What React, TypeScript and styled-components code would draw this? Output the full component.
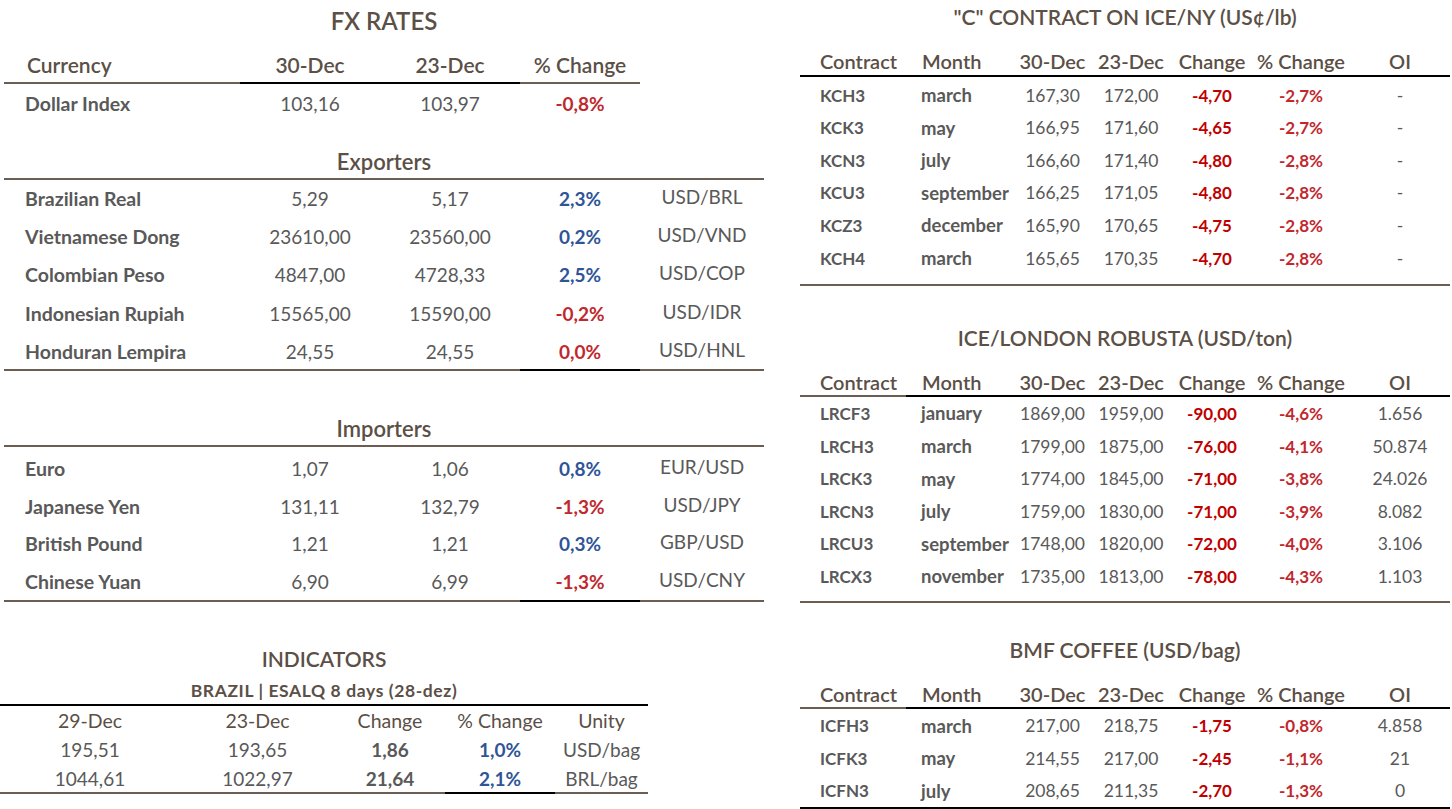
import React from 'react';
import styled, { createGlobalStyle } from 'styled-components';

const BROWN = '#6b5d51';
const INK = '#5b4f46';
const GRAY = '#595959';
const RED = '#c00000';
const RED_SOFT = '#c0282e';
const BLUE = '#2f5597';

const GlobalStyle = createGlobalStyle`
  body {
    margin: 0;
    background: #ffffff;
    font-family: Lato, "Open Sans", "Liberation Sans", sans-serif;
    color: ${GRAY};
  }
`;

type Tone = 'up' | 'down';

interface FxItem {
  name: string;
  last: string;
  prev: string;
  pct: string;
  tone: Tone;
  pair: string;
}

interface ContractItem {
  code: string;
  month: string;
  last: string;
  prev: string;
  change: string;
  pct: string;
  oi: string;
}

const exporters: FxItem[] = [
  { name: 'Brazilian Real', last: '5,29', prev: '5,17', pct: '2,3%', tone: 'up', pair: 'USD/BRL' },
  { name: 'Vietnamese Dong', last: '23610,00', prev: '23560,00', pct: '0,2%', tone: 'up', pair: 'USD/VND' },
  { name: 'Colombian Peso', last: '4847,00', prev: '4728,33', pct: '2,5%', tone: 'up', pair: 'USD/COP' },
  { name: 'Indonesian Rupiah', last: '15565,00', prev: '15590,00', pct: '-0,2%', tone: 'down', pair: 'USD/IDR' },
  { name: 'Honduran Lempira', last: '24,55', prev: '24,55', pct: '0,0%', tone: 'down', pair: 'USD/HNL' },
];

const importers: FxItem[] = [
  { name: 'Euro', last: '1,07', prev: '1,06', pct: '0,8%', tone: 'up', pair: 'EUR/USD' },
  { name: 'Japanese Yen', last: '131,11', prev: '132,79', pct: '-1,3%', tone: 'down', pair: 'USD/JPY' },
  { name: 'British Pound', last: '1,21', prev: '1,21', pct: '0,3%', tone: 'up', pair: 'GBP/USD' },
  { name: 'Chinese Yuan', last: '6,90', prev: '6,99', pct: '-1,3%', tone: 'down', pair: 'USD/CNY' },
];

const arabica: ContractItem[] = [
  { code: 'KCH3', month: 'march', last: '167,30', prev: '172,00', change: '-4,70', pct: '-2,7%', oi: '-' },
  { code: 'KCK3', month: 'may', last: '166,95', prev: '171,60', change: '-4,65', pct: '-2,7%', oi: '-' },
  { code: 'KCN3', month: 'july', last: '166,60', prev: '171,40', change: '-4,80', pct: '-2,8%', oi: '-' },
  { code: 'KCU3', month: 'september', last: '166,25', prev: '171,05', change: '-4,80', pct: '-2,8%', oi: '-' },
  { code: 'KCZ3', month: 'december', last: '165,90', prev: '170,65', change: '-4,75', pct: '-2,8%', oi: '-' },
  { code: 'KCH4', month: 'march', last: '165,65', prev: '170,35', change: '-4,70', pct: '-2,8%', oi: '-' },
];

const robusta: ContractItem[] = [
  { code: 'LRCF3', month: 'january', last: '1869,00', prev: '1959,00', change: '-90,00', pct: '-4,6%', oi: '1.656' },
  { code: 'LRCH3', month: 'march', last: '1799,00', prev: '1875,00', change: '-76,00', pct: '-4,1%', oi: '50.874' },
  { code: 'LRCK3', month: 'may', last: '1774,00', prev: '1845,00', change: '-71,00', pct: '-3,8%', oi: '24.026' },
  { code: 'LRCN3', month: 'july', last: '1759,00', prev: '1830,00', change: '-71,00', pct: '-3,9%', oi: '8.082' },
  { code: 'LRCU3', month: 'september', last: '1748,00', prev: '1820,00', change: '-72,00', pct: '-4,0%', oi: '3.106' },
  { code: 'LRCX3', month: 'november', last: '1735,00', prev: '1813,00', change: '-78,00', pct: '-4,3%', oi: '1.103' },
];

const bmf: ContractItem[] = [
  { code: 'ICFH3', month: 'march', last: '217,00', prev: '218,75', change: '-1,75', pct: '-0,8%', oi: '4.858' },
  { code: 'ICFK3', month: 'may', last: '214,55', prev: '217,00', change: '-2,45', pct: '-1,1%', oi: '21' },
  { code: 'ICFN3', month: 'july', last: '208,65', prev: '211,35', change: '-2,70', pct: '-1,3%', oi: '0' },
];

/* ---------- page ---------- */

const Page = styled.div`
  display: flex;
  width: 1452px;
  height: 809px;
  overflow: hidden;
`;

const LeftColumn = styled.div`
  width: 800px;
  display: flex;
  flex-direction: column;
`;

const RightColumn = styled.div`
  width: 650px;
  display: flex;
  flex-direction: column;
`;

const BlockTitle = styled.div<{ $h: number; $mt?: number; $size?: number }>`
  height: ${p => p.$h}px;
  margin-top: ${p => p.$mt ?? 0}px;
  display: flex;
  align-items: center;
  justify-content: center;
  font-size: ${p => p.$size ?? 21}px;
  font-weight: 600;
  color: ${INK};
`;

const Spacer = styled.div<{ $h: number }>`
  height: ${p => p.$h}px;
  flex: none;
`;

/* ---------- FX table ---------- */

const FxBlock = styled.div`
  width: 760px;
  margin-left: 4px;
`;

const FX_COLS = '236px 140px 140px 120px 124px';

const FxHeader = styled.div`
  display: grid;
  grid-template-columns: ${FX_COLS};
  height: 38px;
  margin-top: 6px;
`;

const HeadCell = styled.div<{ $line?: string; $left?: boolean }>`
  display: flex;
  align-items: center;
  justify-content: ${p => (p.$left ? 'flex-start' : 'center')};
  padding-left: ${p => (p.$left ? '23px' : '0')};
  box-sizing: border-box;
  font-size: 21px;
  font-weight: 600;
  color: ${INK};
  border-bottom: 2px solid ${p => p.$line ?? 'transparent'};
`;

const SectionHead = styled.div<{ $mt: number }>`
  margin-top: ${p => p.$mt}px;
  height: 34px;
  display: flex;
  align-items: center;
  justify-content: center;
  font-size: 22px;
  font-weight: 600;
  color: ${INK};
  border-bottom: 2px solid ${BROWN};
`;

const FxCell = styled.div`
  display: flex;
  align-items: center;
  justify-content: center;
  height: 100%;
  box-sizing: border-box;
  border-bottom: 2px solid transparent;
  font-size: 19px;
  color: ${GRAY};
`;

const NameCell = styled(FxCell)`
  justify-content: flex-start;
  padding-left: 21px;
  font-size: 19.5px;
  font-weight: 700;
`;

const PctCell = styled(FxCell)<{ $tone: Tone }>`
  font-weight: 700;
  color: ${p => (p.$tone === 'up' ? BLUE : RED_SOFT)};
`;

const PairCell = styled(FxCell)`
  padding-bottom: 4px;
`;

const FxRow = styled.div<{ $h: number; $closed?: boolean }>`
  display: grid;
  grid-template-columns: ${FX_COLS};
  height: ${p => p.$h}px;

  &:last-child > ${FxCell} {
    border-bottom-color: ${p => (p.$closed ? BROWN : 'transparent')};
  }
  &:last-child > ${PctCell} {
    border-bottom-color: ${p => (p.$closed ? '#000' : 'transparent')};
  }
`;

const FxBody = styled.div<{ $pt: number }>`
  padding-top: ${p => p.$pt}px;
`;

const FxRows: React.FC<{ items: FxItem[]; rowH: number; pt: number }> = ({ items, rowH, pt }) => (
  <FxBody $pt={pt}>
    {items.map(it => (
      <FxRow key={it.name} $h={rowH} $closed>
        <NameCell>{it.name}</NameCell>
        <FxCell>{it.last}</FxCell>
        <FxCell>{it.prev}</FxCell>
        <PctCell $tone={it.tone}>{it.pct}</PctCell>
        <PairCell>{it.pair}</PairCell>
      </FxRow>
    ))}
  </FxBody>
);

/* ---------- indicators ---------- */

const IND_COLS = '180px 155px 110px 110px 93px';

const Indicators = styled.div`
  width: 648px;
  margin-top: 42px;
`;

const IndSub = styled.div`
  height: 26px;
  display: flex;
  align-items: center;
  justify-content: center;
  font-size: 17.5px;
  font-weight: 700;
  letter-spacing: 0.6px;
  color: ${INK};
  border-bottom: 2px solid #000;
  margin-top: 4px;
`;

const IndHeader = styled.div`
  display: grid;
  grid-template-columns: ${IND_COLS};
  height: 30px;
`;

const IndHeadCell = styled.div`
  display: flex;
  align-items: center;
  justify-content: center;
  font-size: 19.5px;
  font-weight: 400;
  color: ${INK};
`;

const IndCell = styled.div<{ $bold?: boolean; $color?: string }>`
  display: flex;
  align-items: center;
  justify-content: center;
  height: 100%;
  box-sizing: border-box;
  border-bottom: 2px solid transparent;
  font-size: 19px;
  font-weight: ${p => (p.$bold ? 700 : 400)};
  color: ${p => p.$color ?? GRAY};
`;

const IndPct = styled(IndCell)``;

const IndRow = styled.div`
  display: grid;
  grid-template-columns: ${IND_COLS};
  height: 29px;

  &:last-child > ${IndCell} {
    border-bottom-color: ${BROWN};
  }
  &:last-child > ${IndPct} {
    border-bottom-color: #000;
  }
`;

/* ---------- contracts ---------- */

const CT_COLS = '106px 109px 75px 82px 80px 98px 100px';

const CtHeader = styled.div`
  display: grid;
  grid-template-columns: ${CT_COLS};
  height: 29px;
`;

const CtHeadCell = styled.div<{ $line: string; $left?: boolean; $pad?: number }>`
  display: flex;
  align-items: center;
  justify-content: ${p => (p.$left ? 'flex-start' : 'center')};
  padding-left: ${p => p.$pad ?? 0}px;
  box-sizing: border-box;
  font-size: 20px;
  font-weight: 600;
  color: ${INK};
  white-space: nowrap;
  border-bottom: 2px solid ${p => p.$line};
`;

const CtBody = styled.div<{ $line: string; $pt: number; $pb: number }>`
  padding: ${p => p.$pt}px 0 ${p => p.$pb}px;
  border-bottom: 2px solid ${p => p.$line};
`;

const CtRow = styled.div<{ $h: number }>`
  display: grid;
  grid-template-columns: ${CT_COLS};
  height: ${p => p.$h}px;
  align-items: center;
`;

const CtCell = styled.div<{ $left?: boolean; $pad?: number; $bold?: boolean; $color?: string; $size?: number }>`
  text-align: ${p => (p.$left ? 'left' : 'center')};
  padding-left: ${p => p.$pad ?? 0}px;
  font-size: ${p => p.$size ?? 17.5}px;
  font-weight: ${p => (p.$bold ? 700 : 400)};
  color: ${p => p.$color ?? GRAY};
  white-space: nowrap;
`;

interface ContractTableProps {
  items: ContractItem[];
  splitHead: boolean;
  bottom: string;
  rowH: number;
  pt: number;
  pb: number;
}

const ContractTable: React.FC<ContractTableProps> = ({ items, splitHead, bottom, rowH, pt, pb }) => {
  const rest = '#000';
  return (
    <div>
      <CtHeader>
        <CtHeadCell $left $pad={20} $line={splitHead ? BROWN : rest}>Contract</CtHeadCell>
        <CtHeadCell $left $pad={16} $line={rest}>Month</CtHeadCell>
        <CtHeadCell $line={rest}>30-Dec</CtHeadCell>
        <CtHeadCell $line={rest}>23-Dec</CtHeadCell>
        <CtHeadCell $line={rest}>Change</CtHeadCell>
        <CtHeadCell $line={rest}>% Change</CtHeadCell>
        <CtHeadCell $line={rest}>OI</CtHeadCell>
      </CtHeader>
      <CtBody $line={bottom} $pt={pt} $pb={pb}>
        {items.map(it => (
          <CtRow key={it.code} $h={rowH}>
            <CtCell $left $pad={20} $bold $size={17}>{it.code}</CtCell>
            <CtCell $left $pad={15} $bold $size={18.5}>{it.month}</CtCell>
            <CtCell>{it.last}</CtCell>
            <CtCell>{it.prev}</CtCell>
            <CtCell $bold $size={17} $color={RED}>{it.change}</CtCell>
            <CtCell $bold $size={17} $color={RED_SOFT}>{it.pct}</CtCell>
            <CtCell>{it.oi}</CtCell>
          </CtRow>
        ))}
      </CtBody>
    </div>
  );
};

/* ---------- app ---------- */

const App: React.FC = () => (
  <>
    <GlobalStyle />
    <Page>
      <LeftColumn>
        <FxBlock>
          <BlockTitle $h={40} $size={24}>FX RATES</BlockTitle>
          <FxHeader>
            <HeadCell $left $line={BROWN}>Currency</HeadCell>
            <HeadCell $line="#000">30-Dec</HeadCell>
            <HeadCell $line="#000">23-Dec</HeadCell>
            <HeadCell $line={BROWN}>% Change</HeadCell>
            <HeadCell />
          </FxHeader>
          <FxRow $h={40}>
            <NameCell>Dollar Index</NameCell>
            <FxCell>103,16</FxCell>
            <FxCell>103,97</FxCell>
            <PctCell $tone="down">-0,8%</PctCell>
            <PairCell />
          </FxRow>

          <SectionHead $mt={20}>Exporters</SectionHead>
          <FxRows items={exporters} rowH={38.3} pt={0} />

          <SectionHead $mt={40}>Importers</SectionHead>
          <FxRows items={importers} rowH={37.8} pt={3} />
        </FxBlock>

        <Indicators>
          <BlockTitle $h={30}>INDICATORS</BlockTitle>
          <IndSub>BRAZIL | ESALQ 8 days (28-dez)</IndSub>
          <IndHeader>
            <IndHeadCell>29-Dec</IndHeadCell>
            <IndHeadCell>23-Dec</IndHeadCell>
            <IndHeadCell>Change</IndHeadCell>
            <IndHeadCell>% Change</IndHeadCell>
            <IndHeadCell>Unity</IndHeadCell>
          </IndHeader>
          <div>
            <IndRow>
              <IndCell>195,51</IndCell>
              <IndCell>193,65</IndCell>
              <IndCell $bold>1,86</IndCell>
              <IndPct $bold $color={BLUE}>1,0%</IndPct>
              <IndCell>USD/bag</IndCell>
            </IndRow>
            <IndRow>
              <IndCell>1044,61</IndCell>
              <IndCell>1022,97</IndCell>
              <IndCell $bold>21,64</IndCell>
              <IndPct $bold $color={BLUE}>2,1%</IndPct>
              <IndCell>BRL/bag</IndCell>
            </IndRow>
          </div>
        </Indicators>
      </LeftColumn>

      <RightColumn>
        <BlockTitle $h={34}>"C" CONTRACT ON ICE/NY (US¢/lb)</BlockTitle>
        <Spacer $h={14} />
        <ContractTable items={arabica} splitHead={false} bottom={BROWN} rowH={32.6} pt={2} pb={10} />

        <BlockTitle $h={36} $mt={33}>ICE/LONDON ROBUSTA (USD/ton)</BlockTitle>
        <Spacer $h={13} />
        <ContractTable items={robusta} splitHead bottom={BROWN} rowH={32.6} pt={0} pb={8} />

        <BlockTitle $h={36} $mt={29}>BMF COFFEE (USD/bag)</BlockTitle>
        <Spacer $h={13} />
        <ContractTable items={bmf} splitHead bottom="#000" rowH={32.5} pt={0} pb={0} />
      </RightColumn>
    </Page>
  </>
);

export default App;
